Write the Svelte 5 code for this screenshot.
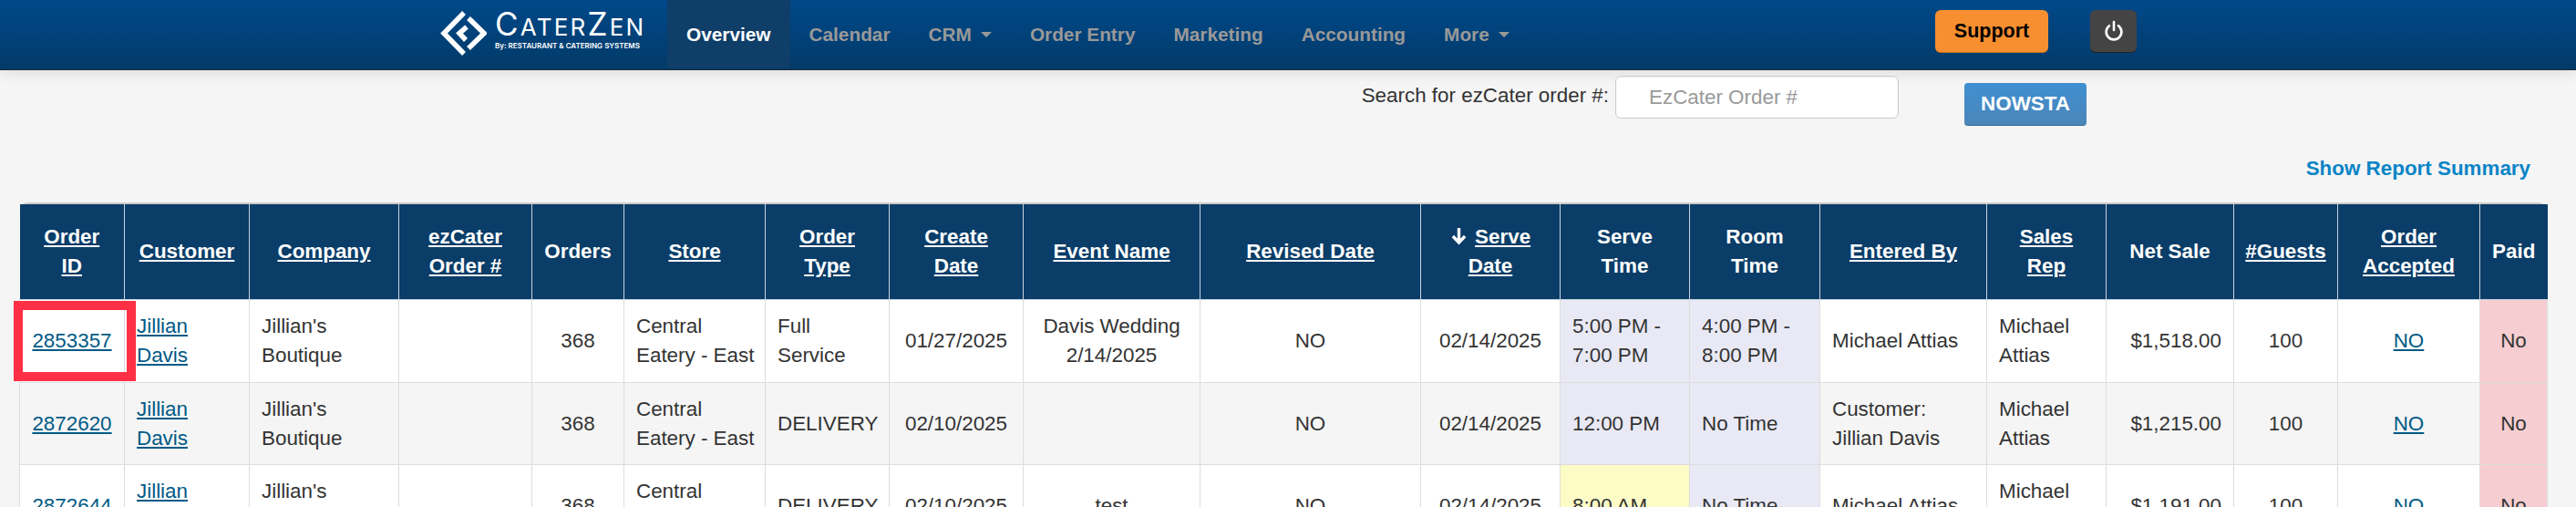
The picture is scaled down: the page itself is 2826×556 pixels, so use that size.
<script>
  const navItems = [
    { label: 'Overview', active: true },
    { label: 'Calendar' },
    { label: 'CRM', caret: true },
    { label: 'Order Entry' },
    { label: 'Marketing' },
    { label: 'Accounting' },
    { label: 'More', caret: true }
  ];

  const columns = [
    { lines: ['Order', 'ID'], width: 115, link: true, align: 'center' },
    { lines: ['Customer'], width: 137, link: true, align: 'left' },
    { lines: ['Company'], width: 164, link: true, align: 'left' },
    { lines: ['ezCater', 'Order #'], width: 146, link: true, align: 'left' },
    { lines: ['Orders'], width: 101, align: 'center' },
    { lines: ['Store'], width: 155, link: true, align: 'left' },
    { lines: ['Order', 'Type'], width: 136, link: true, align: 'left' },
    { lines: ['Create', 'Date'], width: 147, link: true, align: 'center' },
    { lines: ['Event Name'], width: 194, link: true, align: 'center' },
    { lines: ['Revised Date'], width: 242, link: true, align: 'center' },
    { lines: ['Serve', 'Date'], width: 153, link: true, sorted: true, align: 'center' },
    { lines: ['Serve', 'Time'], width: 142, align: 'left' },
    { lines: ['Room', 'Time'], width: 143, align: 'left' },
    { lines: ['Entered By'], width: 183, link: true, align: 'left' },
    { lines: ['Sales', 'Rep'], width: 131, link: true, align: 'left' },
    { lines: ['Net Sale'], width: 140, align: 'right' },
    { lines: ['#Guests'], width: 114, link: true, align: 'center' },
    { lines: ['Order', 'Accepted'], width: 156, link: true, align: 'center' },
    { lines: ['Paid'], width: 74, align: 'center' }
  ];

  const rows = [
    ['2853357', 'Jillian Davis', "Jillian's Boutique", '', '368', 'Central Eatery - East', 'Full Service', '01/27/2025', 'Davis Wedding 2/14/2025', 'NO', '02/14/2025', '5:00 PM - 7:00 PM', '4:00 PM - 8:00 PM', 'Michael Attias', 'Michael Attias', '$1,518.00', '100', 'NO', 'No'],
    ['2872620', 'Jillian Davis', "Jillian's Boutique", '', '368', 'Central Eatery - East', 'DELIVERY', '02/10/2025', '', 'NO', '02/14/2025', '12:00 PM', 'No Time', 'Customer: Jillian Davis', 'Michael Attias', '$1,215.00', '100', 'NO', 'No'],
    ['2872644', 'Jillian Davis', "Jillian's Boutique", '', '368', 'Central Eatery - East', 'DELIVERY', '02/10/2025', 'test', 'NO', '02/14/2025', '8:00 AM', 'No Time', 'Michael Attias', 'Michael Attias', '$1,191.00', '100', 'NO', 'No']
  ];

  const linkCols = [0, 1, 17];

  function tint(r, c) {
    if (c === 18) return 'paid';
    if (c === 11 && r === 2) return 'soon';
    if (c === 11 || c === 12) return 'timed';
    return '';
  }
</script>

<div class="page">
  <header class="navbar">
    <div class="nav-inner">
      <div class="brand">
        <svg class="mark" viewBox="0 0 52 52" aria-hidden="true">
          <polyline points="27,3 5,25.5 27,48" />
          <polyline points="32,9 49,25.5 32,42" />
          <polyline points="30,18.5 22,25.5 29,33" stroke-width="4" />
        </svg>
        <div class="wordmark">
          <div class="name"><b>C</b>ATER<b>Z</b>EN</div>
          <div class="by">By: RESTAURANT &amp; CATERING SYSTEMS</div>
        </div>
      </div>
      <nav class="menu">
        {#each navItems as item}
          <a class="menu-item" class:active={item.active} href="#top">
            {item.label}
            {#if item.caret}<span class="caret"></span>{/if}
          </a>
        {/each}
      </nav>
      <div class="actions">
        <button class="support">Support</button>
        <button class="power" aria-label="Log out">
          <svg viewBox="0 0 24 24" width="24" height="24" aria-hidden="true">
            <path d="M7 6.2a8.4 8.4 0 1 0 10 0" />
            <path d="M12 2v9" />
          </svg>
        </button>
      </div>
    </div>
  </header>

  <main>
    <div class="search-row">
      <label for="ezcater">Search for ezCater order #:</label>
      <input id="ezcater" type="text" placeholder="EzCater Order #" />
      <button class="nowsta">NOWSTA</button>
    </div>

    <div class="summary-row">
      <a href="#top">Show Report Summary</a>
    </div>

    <div class="table-wrap">
      <table>
        <colgroup>
          {#each columns as col}
            <col style="width: {col.width}px" />
          {/each}
        </colgroup>
        <thead>
          <tr>
            {#each columns as col}
              <th>
                {#each col.lines as line, i}
                  {#if i > 0}<br />{/if}
                  {#if col.sorted && i === 0}
                    <svg class="sort" viewBox="0 0 20 22" aria-hidden="true">
                      <path d="M10 2v17M3 11.5l7 7.5 7-7.5" />
                    </svg>
                  {/if}
                  {#if col.link}<a href="#top">{line}</a>{:else}{line}{/if}
                {/each}
              </th>
            {/each}
          </tr>
        </thead>
        <tbody>
          {#each rows as row, r}
            <tr>
              {#each row as value, c}
                <td class={tint(r, c)} class:highlight={r === 0 && c === 0} style="text-align: {columns[c].align}">
                  {#if linkCols.includes(c)}<a href="#top">{value}</a>{:else}{value}{/if}
                  {#if r === 0 && c === 0}<span class="callout"></span>{/if}
                </td>
              {/each}
            </tr>
          {/each}
        </tbody>
      </table>
    </div>
  </main>
</div>

<style>
  :global(body) {
    margin: 0;
    background: #f5f5f5;
  }

  .page {
    height: 556px;
    overflow: hidden;
    font-family: "Liberation Sans", Arial, sans-serif;
    font-size: 22.4px;
    line-height: 32px;
    color: #333;
  }

  .navbar {
    height: 76px;
    background: linear-gradient(to bottom, #00498a, #023a68);
    border-bottom: 1px solid #1a2a38;
    box-shadow: 0 3px 14px rgba(0, 0, 0, 0.1);
  }

  .nav-inner {
    display: flex;
    align-items: flex-start;
    margin: 0 482px;
    height: 100%;
  }

  .brand {
    display: flex;
    width: 250px;
    flex: none;
    padding-top: 11px;
    color: #fff;
  }

  .mark {
    width: 52px;
    height: 52px;
    margin-right: 9px;
    flex: none;
  }

  .mark polyline {
    fill: none;
    stroke: #fff;
    stroke-width: 5.5;
  }

  .name {
    font-family: "Inter", sans-serif;
    font-weight: 400;
    font-size: 26px;
    line-height: 30px;
    height: 33px;
    letter-spacing: 2.2px;
    white-space: nowrap;
  }

  .name b {
    font-weight: 400;
    font-size: 35px;
  }

  .by {
    font-family: "Inter", sans-serif;
    font-weight: 600;
    font-size: 8px;
    line-height: 12px;
    white-space: nowrap;
  }

  .menu {
    display: flex;
  }

  .menu-item {
    display: flex;
    align-items: center;
    gap: 10px;
    height: 75px;
    padding: 0 21px;
    font-size: 20.8px;
    font-weight: 700;
    color: #999;
    text-decoration: none;
    white-space: nowrap;
  }

  .menu-item.active {
    color: #fff;
    background: #0f3e69;
  }

  .caret {
    width: 0;
    height: 0;
    border-left: 6px solid transparent;
    border-right: 6px solid transparent;
    border-top: 6px solid #999;
  }

  .actions {
    display: flex;
    gap: 46px;
    margin-left: auto;
    padding-top: 11px;
  }

  button {
    font-family: inherit;
    cursor: pointer;
  }

  .support {
    width: 124px;
    height: 47px;
    padding: 0;
    border: 0;
    border-bottom: 1px solid #c9731f;
    border-radius: 6px;
    background: #f78f30;
    color: #000;
    font-size: 21.5px;
    font-weight: 700;
  }

  .power {
    display: flex;
    align-items: center;
    justify-content: center;
    width: 51px;
    height: 47px;
    padding: 0;
    border: 0;
    border-bottom: 1px solid #222;
    border-radius: 6px;
    background: #444;
  }

  .power path {
    fill: none;
    stroke: #fff;
    stroke-width: 2.6;
    stroke-linecap: round;
  }

  .search-row {
    display: flex;
    align-items: flex-start;
    justify-content: flex-end;
    padding: 6px 537px 0 0;
  }

  label {
    margin-top: 6px;
    margin-right: 7px;
    white-space: nowrap;
  }

  input {
    box-sizing: border-box;
    width: 311px;
    height: 47px;
    padding: 0 36px;
    border: 1px solid #ccc;
    border-radius: 6px;
    background: #fff;
    font-family: inherit;
    font-size: 22.4px;
    color: #333;
    box-shadow: inset 0 1px 2px rgba(0, 0, 0, 0.08);
  }

  input::placeholder {
    color: #999;
  }

  .nowsta {
    width: 134px;
    height: 47px;
    margin-top: 8px;
    margin-left: 72px;
    padding: 0;
    border: 0;
    border-bottom: 1px solid #33699a;
    border-radius: 4px;
    background: linear-gradient(to bottom, #3f8fd2, #4b86b8);
    color: #fff;
    font-size: 22.4px;
    font-weight: 700;
  }

  .summary-row {
    margin-top: 31px;
    padding-right: 50px;
    text-align: right;
  }

  .summary-row a {
    font-weight: 700;
    color: #0a84c6;
    text-decoration: none;
  }

  .table-wrap {
    margin: 21px 31px 0 21px;
    border-top: 2px solid #ccc;
    border-radius: 10px 10px 0 0;
  }

  table {
    width: 2774px;
    table-layout: fixed;
    border-collapse: collapse;
  }

  th {
    padding: 20px 4px;
    background: #0a3d68;
    border: 1px solid #c9d3dc;
    border-top: 0;
    color: #fff;
    font-weight: 700;
    text-align: center;
    vertical-align: middle;
  }

  th:first-child,
  th:last-child {
    border-left: 0;
    border-right: 0;
  }

  th a {
    color: #fff;
    text-decoration: underline;
  }

  .sort {
    display: inline-block;
    width: 19px;
    height: 21px;
    margin-right: 2px;
    vertical-align: -2px;
  }

  .sort path {
    fill: none;
    stroke: #fff;
    stroke-width: 3.6;
  }

  td {
    padding: 13px 8px 12.5px 13px;
    border: 1px solid #ddd;
    vertical-align: middle;
    background: #fff;
  }

  td[style*="center"] {
    padding-left: 8px;
  }

  td[style*="right"] {
    padding-right: 13px;
  }

  tbody tr:nth-child(even) td {
    background: #f5f5f5;
  }

  td a {
    color: #005a85;
    text-decoration: underline;
  }

  tbody tr td.timed {
    background: #e9e9f5;
  }

  tbody tr td.soon {
    background: #fdfcc6;
  }

  tbody tr td.paid {
    background: #f6cdd0;
  }

  .highlight {
    position: relative;
  }

  .callout {
    position: absolute;
    left: -7px;
    top: 1px;
    width: 114px;
    height: 68px;
    border: 10px solid #ff3045;
    pointer-events: none;
  }
</style>
